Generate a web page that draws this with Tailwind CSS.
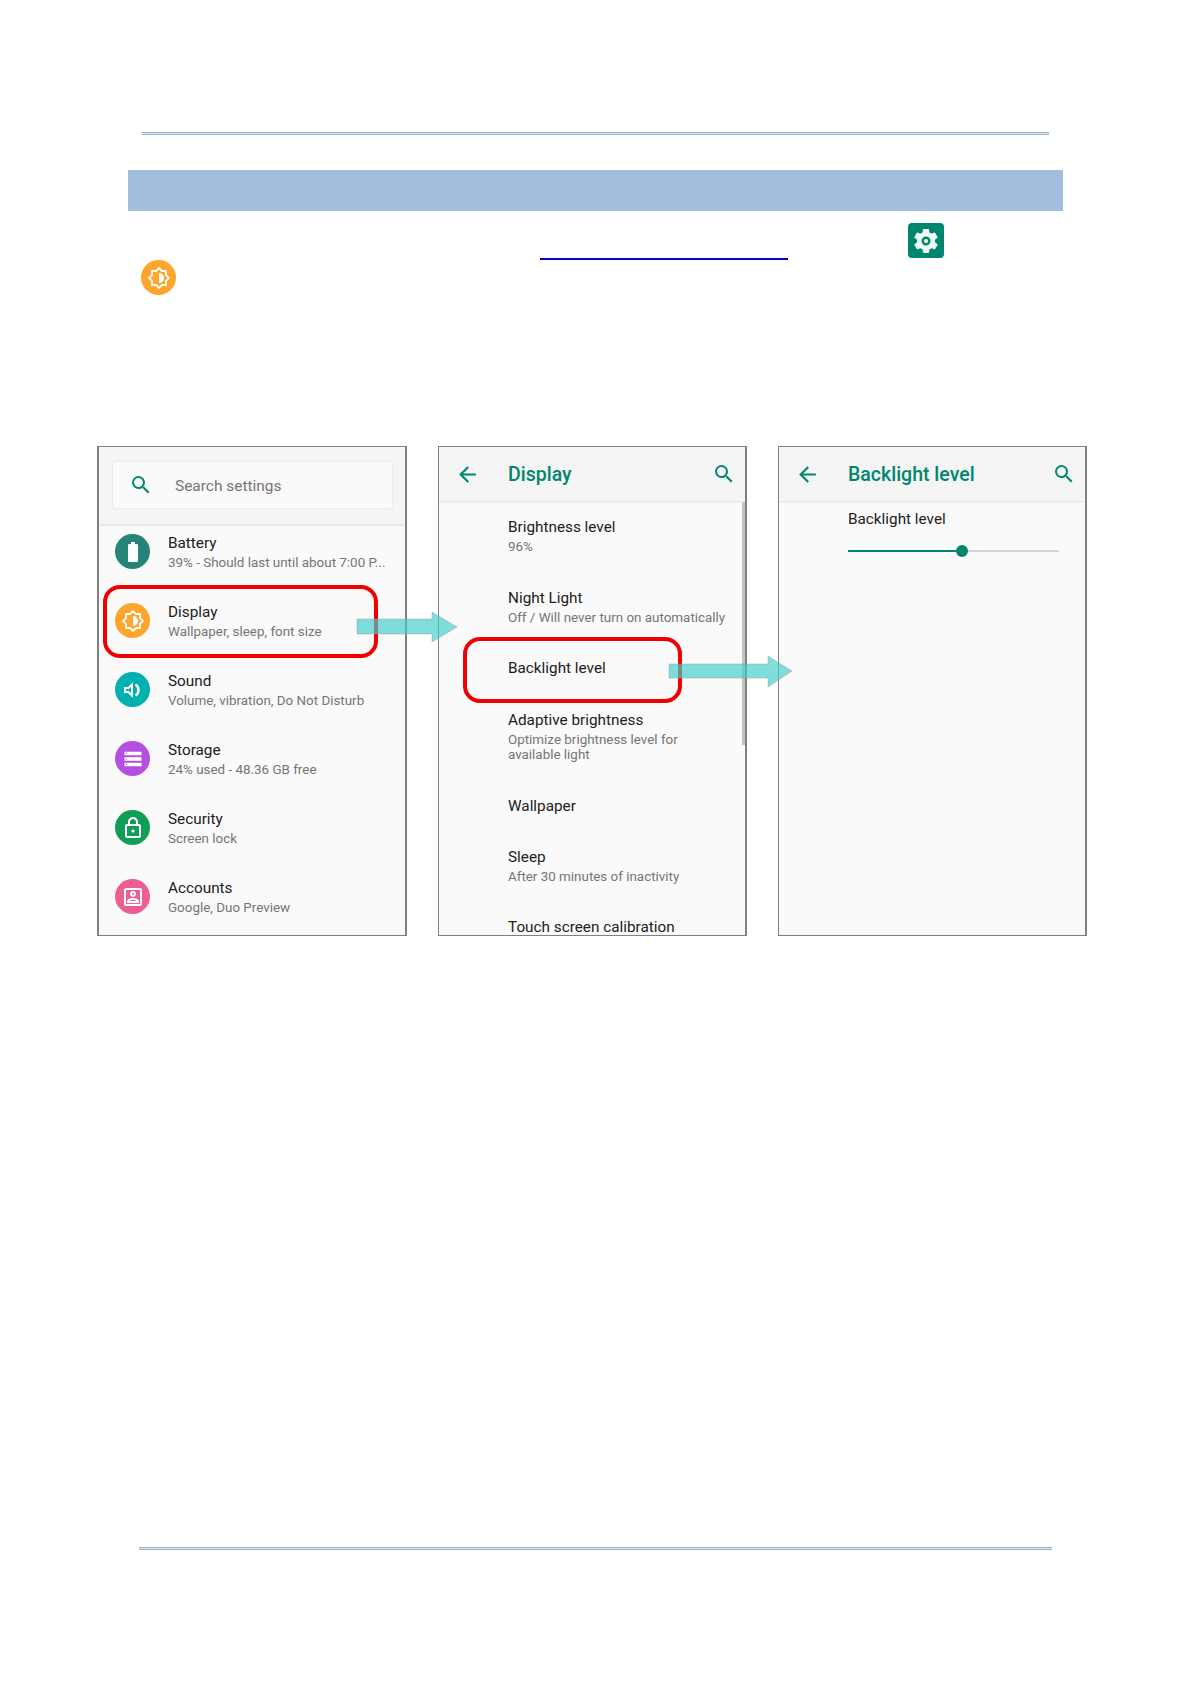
<!DOCTYPE html>
<html>
<head>
<meta charset="utf-8">
<script src="https://cdn.jsdelivr.net/npm/@tailwindcss/browser@4"></script>
</head>
<body class="bg-white">
<div class="relative w-[1191px] h-[1683px] overflow-hidden bg-white flex flex-col font-['Roboto',sans-serif]">
  <div class="mt-[132px] ml-[142px] w-[907px] h-[3px] border-y border-[#94b3c6] bg-[#dfe8ef]"></div>
  <div class="mt-[35px] ml-[128px] w-[935px] h-[41px] bg-[#a4bfdd]"></div>
  <div class="mt-[12px] ml-[540px] h-[37px] flex items-start">
    <div class="self-end w-[248px] h-[2px] bg-[#0000d0]"></div>
    <div class="ml-[120px] w-[36px] h-[35px] rounded-[4px] bg-[#00866e] flex items-center justify-center">
      <svg viewBox="0 0 24 24" class="w-[30px] h-[30px] fill-[#eef8f6]"><path d="M19.14 12.94c.04-.3.06-.61.06-.94 0-.32-.02-.64-.07-.94l2.03-1.58a.49.49 0 0 0 .12-.61l-1.92-3.32a.488.488 0 0 0-.59-.29l-2.39.96c-.5-.38-1.03-.7-1.62-.94l-.36-2.54a.484.484 0 0 0-.48-.41h-3.84c-.24 0-.43.17-.47.41l-.36 2.54c-.59.24-1.13.57-1.62.94l-2.39-.96c-.22-.08-.47 0-.59.22L2.74 8.87c-.12.21-.08.47.12.61l2.03 1.58c-.05.3-.09.63-.09.94s.02.64.07.94l-2.03 1.58a.49.49 0 0 0-.12.61l1.92 3.32c.12.22.37.29.59.22l2.39-.96c.5.38 1.03.7 1.62.94l.36 2.54c.05.24.24.41.48.41h3.84c.24 0 .44-.17.47-.41l.36-2.54c.59-.24 1.13-.56 1.62-.94l2.39.96c.22.08.47 0 .59-.22l1.92-3.32c.12-.22.07-.47-.12-.61l-2.01-1.58zM12 15.6c-1.98 0-3.6-1.62-3.6-3.6s1.62-3.6 3.6-3.6 3.6 1.62 3.6 3.6-1.62 3.6-3.6 3.6z"/><circle cx="12" cy="12" r="1.7"/></svg>
    </div>
  </div>
  <div class="ml-[141px] w-[35px] h-[35px] rounded-full bg-[#ffa42c] flex items-center justify-center">
    <svg viewBox="0 0 24 24" class="w-[24px] h-[24px] fill-none stroke-white stroke-[1.8]"><path d="M19 9.1V5h-4.1L12 2.1 9.1 5H5v4.1L2.1 12 5 14.9V19h4.1l2.9 2.9 2.9-2.9H19v-4.1l2.9-2.9z"/><path d="M12 7a5 5 0 0 1 0 10z" class="fill-white stroke-none"/></svg>
  </div>

  <div class="mt-[151px] ml-[97px] flex gap-[31px] h-[490px]">
    <!-- Panel 1 -->
    <div class="w-[310px] h-[490px] border border-x-2 border-[#808080] bg-[#fafafa] overflow-hidden flex flex-col">
      <div class="h-[77px] shrink-0 bg-[#f5f5f5] shadow-[0_1px_3px_rgba(0,0,0,0.12)] pt-[15px] pl-[14px]">
        <div class="w-[279px] h-[46px] bg-[#fafafa] rounded-[2px] shadow-[0_0_2px_rgba(0,0,0,0.14)] flex items-center">
          <svg viewBox="0 0 24 24" class="ml-[16px] w-[24px] h-[24px] fill-[#00866e]"><path d="M15.5 14h-.79l-.28-.27A6.471 6.471 0 0 0 16 9.5 6.5 6.5 0 1 0 9.5 16c1.61 0 3.09-.59 4.23-1.57l.27.28v.79l5 4.99L20.49 19l-4.99-5zm-6 0C7.01 14 5 11.99 5 9.5S7.01 5 9.5 5 14 7.01 14 9.5 11.99 14 9.5 14z"/></svg>
          <span class="ml-[22px] mt-[3px] text-[15.45px] text-[#757575]">Search settings</span>
        </div>
      </div>
      <div class="pt-[10px] pl-[16px] flex flex-col gap-[34px]">
        <div class="flex items-center h-[35px]">
          <div class="w-[35px] h-[35px] shrink-0 rounded-full bg-[#268377] flex items-center justify-center">
            <svg viewBox="0 0 24 24" class="w-[24px] h-[24px] fill-white"><path d="M15.67 4H14V2h-4v2H8.33C7.6 4 7 4.6 7 5.33v15.33C7 21.4 7.6 22 8.33 22h7.33c.74 0 1.34-.6 1.34-1.33V5.33C17 4.6 16.4 4 15.67 4z"/></svg>
          </div>
          <div class="ml-[18px]"><div class="text-[15.3px] leading-[20px] text-[#212121]">Battery</div><div class="mt-[2px] text-[13.4px] leading-[15px] text-[#757575] whitespace-nowrap">39% - Should last until about 7:00 P...</div></div>
        </div>
        <div class="flex items-center h-[35px]">
          <div class="w-[35px] h-[35px] shrink-0 rounded-full bg-[#ffa42c] flex items-center justify-center">
            <svg viewBox="0 0 24 24" class="w-[24px] h-[24px] fill-none stroke-white stroke-[1.8]"><path d="M19 9.1V5h-4.1L12 2.1 9.1 5H5v4.1L2.1 12 5 14.9V19h4.1l2.9 2.9 2.9-2.9H19v-4.1l2.9-2.9z"/><path d="M12 7a5 5 0 0 1 0 10z" class="fill-white stroke-none"/></svg>
          </div>
          <div class="ml-[18px]"><div class="text-[15.3px] leading-[20px] text-[#212121]">Display</div><div class="mt-[2px] text-[13.4px] leading-[15px] text-[#757575]">Wallpaper, sleep, font size</div></div>
        </div>
        <div class="flex items-center h-[35px]">
          <div class="w-[35px] h-[35px] shrink-0 rounded-full bg-[#00b1b0] flex items-center justify-center">
            <svg viewBox="0 0 24 24" class="w-[24px] h-[24px] fill-white"><path d="M3 9v6h4l5 5V4L7 9H3zm7-.17v6.34L7.83 13H5v-2h2.83L10 8.83z"/><path d="M14.5 6.5a6.5 6.5 0 0 1 0 11" class="fill-none stroke-white stroke-[2.4]"/></svg>
          </div>
          <div class="ml-[18px]"><div class="text-[15.3px] leading-[20px] text-[#212121]">Sound</div><div class="mt-[2px] text-[13.4px] leading-[15px] text-[#757575]">Volume, vibration, Do Not Disturb</div></div>
        </div>
        <div class="flex items-center h-[35px]">
          <div class="w-[35px] h-[35px] shrink-0 rounded-full bg-[#b44fe0] flex items-center justify-center">
            <svg viewBox="0 0 24 24" class="w-[24px] h-[24px] fill-white"><path fill-rule="evenodd" d="M3.5 4.75h17v3.5h-17zM5 6v1h1V6zM3.5 10.25h17v3.5h-17zM5 11.5v1h1v-1zM3.5 15.75h17v3.5h-17zM5 17v1h1v-1z"/></svg>
          </div>
          <div class="ml-[18px]"><div class="text-[15.3px] leading-[20px] text-[#212121]">Storage</div><div class="mt-[2px] text-[13.4px] leading-[15px] text-[#757575]">24% used - 48.36 GB free</div></div>
        </div>
        <div class="flex items-center h-[35px]">
          <div class="w-[35px] h-[35px] shrink-0 rounded-full bg-[#109d58] flex items-center justify-center">
            <svg viewBox="0 0 24 24" class="w-[24px] h-[24px] fill-white"><path d="M18 8h-1V6c0-2.76-2.24-5-5-5S7 3.24 7 6v2H6c-1.1 0-2 .9-2 2v10c0 1.1.9 2 2 2h12c1.1 0 2-.9 2-2V10c0-1.1-.9-2-2-2zM9 6c0-1.66 1.34-3 3-3s3 1.34 3 3v2H9V6zm9 14H6V10h12v10z"/><circle cx="12" cy="15" r="1.6"/></svg>
          </div>
          <div class="ml-[18px]"><div class="text-[15.3px] leading-[20px] text-[#212121]">Security</div><div class="mt-[2px] text-[13.4px] leading-[15px] text-[#757575]">Screen lock</div></div>
        </div>
        <div class="flex items-center h-[35px]">
          <div class="w-[35px] h-[35px] shrink-0 rounded-full bg-[#ef5e92] flex items-center justify-center">
            <svg viewBox="0 0 24 24" class="w-[24px] h-[24px] fill-white"><path d="M19 5v14H5V5h14m0-2H5c-1.11 0-2 .9-2 2v14c0 1.1.89 2 2 2h14c1.1 0 2-.9 2-2V5c0-1.1-.9-2-2-2zm-7 9c-1.66 0-3-1.34-3-3s1.34-3 3-3 3 1.34 3 3-1.34 3-3 3zm0-4c-.55 0-1 .45-1 1s.45 1 1 1 1-.45 1-1-.45-1-1-1zm6 10H6v-1.53c0-2.5 3.97-3.58 6-3.58s6 1.08 6 3.58V18zm-9.69-2h7.38c-.69-.56-2.38-1.12-3.69-1.12s-3.01.56-3.69 1.12z"/></svg>
          </div>
          <div class="ml-[18px]"><div class="text-[15.3px] leading-[20px] text-[#212121]">Accounts</div><div class="mt-[2px] text-[13.4px] leading-[15px] text-[#757575]">Google, Duo Preview</div></div>
        </div>
      </div>
    </div>

    <!-- Panel 2 -->
    <div class="relative w-[309px] h-[490px] border border-r-2 border-[#808080] bg-[#fafafa] overflow-hidden flex flex-col">
      <div class="h-[54px] shrink-0 bg-[#f5f5f5] shadow-[0_1px_2px_rgba(0,0,0,0.1)] flex items-center">
        <svg viewBox="0 0 24 24" class="ml-[16px] w-[25px] h-[25px] fill-[#00866e]"><path d="M20 11H7.83l5.59-5.59L12 4l-8 8 8 8 1.41-1.41L7.83 13H20v-2z"/></svg>
        <span class="ml-[28px] mt-[2px] text-[19.5px] font-medium text-[#00866e]">Display</span>
        <svg viewBox="0 0 24 24" class="ml-auto mr-[9px] w-[24px] h-[24px] fill-[#00866e]"><path d="M15.5 14h-.79l-.28-.27A6.471 6.471 0 0 0 16 9.5 6.5 6.5 0 1 0 9.5 16c1.61 0 3.09-.59 4.23-1.57l.27.28v.79l5 4.99L20.49 19l-4.99-5zm-6 0C7.01 14 5 11.99 5 9.5S7.01 5 9.5 5 14 7.01 14 9.5 11.99 14 9.5 14z"/></svg>
      </div>
      <div class="pl-[69px] flex flex-col">
        <div class="mt-[16px] text-[15.3px] leading-[20px] text-[#212121]">Brightness level</div>
        <div class="mt-[2px] text-[13.4px] leading-[15px] text-[#757575]">96%</div>
        <div class="mt-[34px] text-[15.3px] leading-[20px] text-[#212121]">Night Light</div>
        <div class="mt-[2px] text-[13.4px] leading-[15px] text-[#757575]">Off / Will never turn on automatically</div>
        <div class="mt-[33px] text-[15.3px] leading-[20px] text-[#212121]">Backlight level</div>
        <div class="mt-[32px] text-[15.3px] leading-[20px] text-[#212121]">Adaptive brightness</div>
        <div class="mt-[2px] text-[13.4px] leading-[15px] text-[#757575]">Optimize brightness level for<br>available light</div>
        <div class="mt-[34px] text-[15.3px] leading-[20px] text-[#212121]">Wallpaper</div>
        <div class="mt-[31px] text-[15.3px] leading-[20px] text-[#212121]">Sleep</div>
        <div class="mt-[2px] text-[13.4px] leading-[15px] text-[#757575]">After 30 minutes of inactivity</div>
        <div class="mt-[33px] text-[15.3px] leading-[20px] text-[#212121]">Touch screen calibration</div>
      </div>
      <div class="absolute right-0 top-[55px] w-[3px] h-[243px] bg-[#c4c4c4]"></div>
    </div>

    <!-- Panel 3 -->
    <div class="w-[309px] h-[490px] border border-r-2 border-[#808080] bg-[#fafafa] overflow-hidden flex flex-col">
      <div class="h-[54px] shrink-0 bg-[#f5f5f5] shadow-[0_1px_2px_rgba(0,0,0,0.1)] flex items-center">
        <svg viewBox="0 0 24 24" class="ml-[16px] w-[25px] h-[25px] fill-[#00866e]"><path d="M20 11H7.83l5.59-5.59L12 4l-8 8 8 8 1.41-1.41L7.83 13H20v-2z"/></svg>
        <span class="ml-[28px] mt-[2px] text-[19.5px] font-medium text-[#00866e]">Backlight level</span>
        <svg viewBox="0 0 24 24" class="ml-auto mr-[9px] w-[24px] h-[24px] fill-[#00866e]"><path d="M15.5 14h-.79l-.28-.27A6.471 6.471 0 0 0 16 9.5 6.5 6.5 0 1 0 9.5 16c1.61 0 3.09-.59 4.23-1.57l.27.28v.79l5 4.99L20.49 19l-4.99-5zm-6 0C7.01 14 5 11.99 5 9.5S7.01 5 9.5 5 14 7.01 14 9.5 11.99 14 9.5 14z"/></svg>
      </div>
      <div class="pl-[69px] pr-[26px]">
        <div class="mt-[8px] text-[15.3px] leading-[20px] text-[#212121]">Backlight level</div>
        <div class="mt-[16px] flex items-center h-[12px]">
          <div class="w-[108px] h-[2px] bg-[#00866e]"></div>
          <div class="w-[12px] h-[12px] shrink-0 rounded-full bg-[#00866e]"></div>
          <div class="flex-1 h-[2px] bg-[#d4d4d4]"></div>
        </div>
      </div>
    </div>
  </div>

  <div class="mt-[611px] ml-[139px] w-[913px] h-[3px] border-y border-[#94b3c6] bg-[#dfe8ef]"></div>

  <!-- Callouts over the panels -->
  <svg class="absolute left-0 top-0 w-[1191px] h-[1683px] pointer-events-none" viewBox="0 0 1191 1683">
    <rect x="105" y="587" width="271" height="69" rx="15" class="fill-none stroke-[#f00000] stroke-[4px]"/>
    <rect x="465" y="639" width="215" height="62" rx="15" class="fill-none stroke-[#f00000] stroke-[4px]"/>
    <polygon points="357,619 432,619 432,612 457,627 432,642 432,634 357,634" class="fill-[#40cec9] [fill-opacity:0.67] stroke-[#999] [stroke-opacity:0.4]"/>
    <polygon points="669,664 768,664 768,656 792,671 768,687 768,678 669,678" class="fill-[#40cec9] [fill-opacity:0.67] stroke-[#999] [stroke-opacity:0.4]"/>
  </svg>
</div>
</body>
</html>
